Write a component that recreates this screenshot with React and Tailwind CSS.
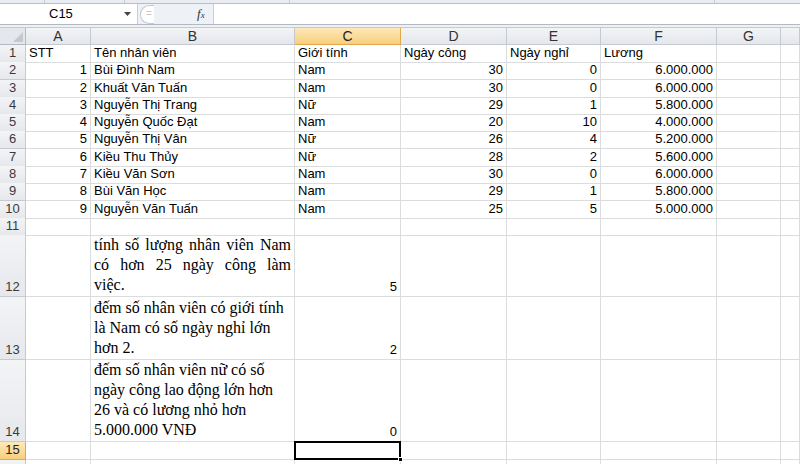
import React from "react";

const rows = [
  ["STT", "Tên nhân viên", "Giới tính", "Ngày công", "Ngày nghỉ", "Lương"],
  [1, "Bùi Đình Nam", "Nam", 30, 0, "6.000.000"],
  [2, "Khuất Văn Tuấn", "Nam", 30, 0, "6.000.000"],
  [3, "Nguyễn Thị Trang", "Nữ", 29, 1, "5.800.000"],
  [4, "Nguyễn Quốc Đạt", "Nam", 20, 10, "4.000.000"],
  [5, "Nguyễn Thị Vân", "Nữ", 26, 4, "5.200.000"],
  [6, "Kiều Thu Thủy", "Nữ", 28, 2, "5.600.000"],
  [7, "Kiều Văn Sơn", "Nam", 30, 0, "6.000.000"],
  [8, "Bùi Văn Học", "Nam", 29, 1, "5.800.000"],
  [9, "Nguyễn Văn Tuấn", "Nam", 25, 5, "5.000.000"],
];

// row 12 is justified in the sheet, so its lines are kept as they wrap there
const notes = [
  { h: "h-[62px]", lines: ["tính số lượng nhân viên Nam", "có hơn 25 ngày công làm", "việc."], value: 5 },
  { h: "h-[63px]", text: "đếm số nhân viên có giới tính là Nam có số ngày nghỉ lớn hơn 2.", value: 2 },
  { h: "h-[82px]", text: "đếm số nhân viên nữ có số ngày công lao động lớn hơn 26 và có lương nhỏ hơn 5.000.000 VNĐ", value: 0 },
];

const cols = "grid grid-cols-[26px_65px_204px_106px_106px_94px_116px_64px_1fr]";
const cell = "border-r border-b border-[#dadcdd] px-[3px] overflow-hidden whitespace-nowrap";
const rowHead =
  "border-r border-b border-[#c5cad2] bg-gradient-to-b from-[#f3f4f6] to-[#e6e8ec] text-[#3a3a3a] flex items-end justify-center pb-[1px]";
const serif = "font-['Liberation_Serif','Times_New_Roman',serif] text-[16px] leading-[20px]";

const App = () => {
  return (
    <div className="w-[800px] h-[464px] overflow-hidden bg-white text-[13px] leading-[16px] text-black font-['Liberation_Sans',Arial,sans-serif]">
      {/* RIBBON EDGE */}
      <div className="h-[4px] bg-[#e9edf2] border-b border-[#b8bec7] flex">
        <div className="w-[45px] border-r border-[#c6ccd4]" />
        <div className="w-[80px] border-r border-[#c6ccd4]" />
        <div className="w-[165px] border-r border-[#c6ccd4]" />
        <div className="w-[425px] border-r border-[#c6ccd4]" />
      </div>
      {/* FORMULA BAR */}
      <div className="h-[21px] flex bg-[#eef1f5] border-b border-[#b3b8c0]">
        <div className="w-[138px] bg-white border-r border-[#c9ced6] flex items-center relative">
          <span className="ml-[49px] text-[13px]">C15</span>
          <svg className="absolute left-[124px] top-[8px]" width="7" height="4" viewBox="0 0 7 4">
            <path d="M0 0h7L3.5 4z" fill="#444" />
          </svg>
        </div>
        <div className="w-[75px] flex items-center relative">
          <div className="absolute left-[2px] top-[1px] w-[14px] h-[19px] rounded-l-full border-l border-t border-b border-[#c3c8cf] bg-white" />
          <span className="absolute left-[8px] top-[2px] text-[10px] text-[#c8c8c8]">=</span>
          <span className="absolute left-[59px] top-[2px] font-['Liberation_Serif',serif] italic text-[13px] text-[#333]">
            f<span className="text-[9px]">x</span>
          </span>
        </div>
        <div className="flex-1 bg-white border-l border-[#c9ced6]" />
      </div>
      <div className="h-[2px] bg-[#eef1f5]" />
      {/* GRID */}
      <div className={`${cols} h-[18px] border-t border-[#c5cad2]`}>
        <div className="border-r border-b border-[#b3b9c2] bg-[#e4e7eb] relative">
          <svg className="absolute right-[2px] bottom-[2px]" width="10" height="10" viewBox="0 0 10 10">
            <path d="M10 0v10H0z" fill="#c5c9cf" />
          </svg>
        </div>
        {["A", "B", "C", "D", "E", "F", "G", ""].map((c) => (
          <div
            key={c || "H"}
            className={
              c === "C"
                ? "border-r border-b border-[#e2a94b] bg-gradient-to-b from-[#fde9b9] to-[#f7cf7d] text-[#222] flex items-center justify-center text-[14px]"
                : "border-r border-b border-[#c5cad2] bg-gradient-to-b from-[#f3f4f6] to-[#e4e7eb] text-[#333] flex items-center justify-center text-[14px]"
            }
          >
            {c}
          </div>
        ))}
      </div>
      {rows.map((r, i) => (
        <div key={i} className={`${cols} h-[17.3px]`}>
          <div className={rowHead}>{i + 1}</div>
          <div className={`${cell} ${i === 0 ? "" : "text-right"}`}>{r[0]}</div>
          <div className={cell}>{r[1]}</div>
          <div className={cell}>{r[2]}</div>
          <div className={`${cell} ${i === 0 ? "" : "text-right"}`}>{r[3]}</div>
          <div className={`${cell} ${i === 0 ? "" : "text-right"}`}>{r[4]}</div>
          <div className={`${cell} ${i === 0 ? "" : "text-right"}`}>{r[5]}</div>
          <div className={cell} />
          <div className={cell} />
        </div>
      ))}
      <div className={`${cols} h-[17.3px]`}>
        <div className={rowHead}>11</div>
        {Array.from({ length: 8 }).map((_, k) => (
          <div key={k} className={cell} />
        ))}
      </div>
      {notes.map((n, i) => (
        <div key={i} className={`${cols} ${n.h}`}>
          <div className={rowHead}>{12 + i}</div>
          <div className={cell} />
          <div className="border-r border-b border-[#dadcdd] px-[3px] flex items-end pb-[1px]">
            {n.lines ? (
              <div className={`w-[197px] ${serif}`}>
                {n.lines.map((l, k) => (
                  <div
                    key={k}
                    className={k < n.lines.length - 1 ? "text-justify [text-align-last:justify]" : ""}
                  >
                    {l}
                  </div>
                ))}
              </div>
            ) : (
              <p className={`w-[197px] ${serif}`}>{n.text}</p>
            )}
          </div>
          <div className={`${cell} flex items-end justify-end pb-[1px]`}>{n.value}</div>
          {Array.from({ length: 5 }).map((_, k) => (
            <div key={k} className={cell} />
          ))}
        </div>
      ))}
      <div className={`${cols} h-[17.3px]`}>
        <div className="border-r border-b border-[#e2a94b] bg-gradient-to-b from-[#fde9b9] to-[#f7cf7d] text-[#222] flex items-end justify-center pb-[1px]">
          15
        </div>
        <div className={cell} />
        <div className={cell} />
        <div className="relative border-r border-b border-[#dadcdd]">
          <div className="absolute -left-[1px] -top-[1px] -right-[1px] -bottom-[1px] border-2 border-black" />
          <div className="absolute -right-[3px] -bottom-[3px] w-[5px] h-[5px] bg-black border border-white" />
        </div>
        {Array.from({ length: 5 }).map((_, k) => (
          <div key={k} className={cell} />
        ))}
      </div>
      <div className={`${cols} h-[17.3px]`}>
        <div className={rowHead} />
        {Array.from({ length: 8 }).map((_, k) => (
          <div key={k} className={cell} />
        ))}
      </div>
    </div>
  );
};

export default App;
